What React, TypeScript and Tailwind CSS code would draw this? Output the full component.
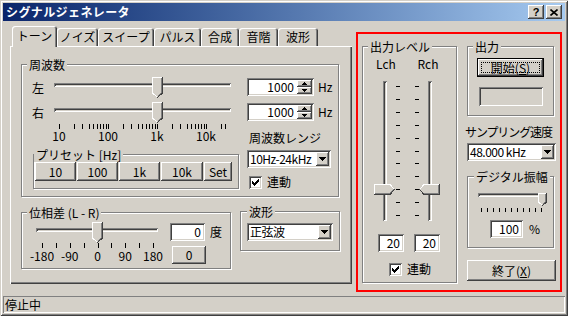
import React from "react";

const RAISED =
  "bg-[#d4d0c8] shadow-[inset_-1px_-1px_0_#404040,inset_1px_1px_0_#ffffff,inset_-2px_-2px_0_#808080]";
const SUNKEN =
  "bg-white shadow-[inset_1px_1px_0_#808080,inset_-1px_-1px_0_#ffffff,inset_2px_2px_0_#404040,inset_-2px_-2px_0_#d4d0c8]";
const ETCHED = "border border-[#808080] shadow-[inset_1px_1px_0_#ffffff,1px_1px_0_#ffffff]";
const GROOVE =
  "bg-[#d4d0c8] shadow-[inset_1px_1px_0_#808080,inset_-1px_-1px_0_#ffffff,inset_2px_2px_0_#404040]";

function GroupBox({
  title,
  className = "",
  labelClass = "ml-[5px]",
  children,
}: {
  title: string;
  className?: string;
  labelClass?: string;
  children?: React.ReactNode;
}) {
  return (
    <div className={`${ETCHED} ${className}`}>
      <div className={`-mt-[7px] h-[14px] flex ${labelClass}`}>
        <span className="bg-[#d4d0c8] px-[2px] whitespace-pre">{title}</span>
      </div>
      {children}
    </div>
  );
}

// trackbar thumbs
function ThumbDown({ w = 11, h = 21, p = 5 }: { w?: number; h?: number; p?: number }) {
  const b = h - p;
  const m = (w - 1) / 2;
  return (
    <svg width={w} height={h} className="block" shapeRendering="crispEdges">
      <polygon points={`0,0 ${w},0 ${w},${b} ${w / 2},${h} 0,${b}`} fill="#d4d0c8" />
      <path d={`M0.5 ${b} V0.5 H${w - 1}`} stroke="#fff" fill="none" />
      <path d={`M0.5 ${b} L${m + 0.5} ${h - 0.5}`} stroke="#fff" fill="none" />
      <path d={`M${w - 0.5} 0 V${b} L${m + 0.5} ${h - 0.5}`} stroke="#404040" fill="none" />
      <path d={`M${w - 1.5} 1 V${b - 0.5} L${m + 0.5} ${h - 1.5}`} stroke="#808080" fill="none" />
    </svg>
  );
}

function ThumbRight() {
  const W = 21, H = 11, p = 5, b = W - p, m = 5;
  return (
    <svg width={W} height={H} className="block" shapeRendering="crispEdges">
      <polygon points={`0,0 ${b},0 ${W},${H / 2} ${b},${H} 0,${H}`} fill="#d4d0c8" />
      <path d={`M0.5 ${H - 1} V0.5 H${b}`} stroke="#fff" fill="none" />
      <path d={`M${b} 0.5 L${W - 0.5} ${m + 0.5}`} stroke="#fff" fill="none" />
      <path d={`M0 ${H - 0.5} H${b} L${W - 0.5} ${m + 0.5}`} stroke="#404040" fill="none" />
      <path d={`M1 ${H - 1.5} H${b - 0.5} L${W - 1.5} ${m + 0.5}`} stroke="#808080" fill="none" />
    </svg>
  );
}

function ThumbLeft() {
  const W = 21, H = 11, p = 5, m = 5;
  return (
    <svg width={W} height={H} className="block" shapeRendering="crispEdges">
      <polygon points={`${p},0 ${W},0 ${W},${H} ${p},${H} 0,${H / 2}`} fill="#d4d0c8" />
      <path d={`M${p} 0.5 H${W - 1}`} stroke="#fff" fill="none" />
      <path d={`M0.5 ${m + 0.5} L${p} 0.5`} stroke="#fff" fill="none" />
      <path d={`M${W - 0.5} 0 V${H - 0.5} H${p} L0.5 ${m + 0.5}`} stroke="#404040" fill="none" />
      <path d={`M${W - 1.5} 1 V${H - 1.5} H${p}`} stroke="#808080" fill="none" />
    </svg>
  );
}

function HSlider({ className, thumb }: { className: string; thumb: number }) {
  return (
    <div className={`relative h-[21px] ${className}`}>
      <div className={`mt-[6px] h-[4px] ${GROOVE}`} />
      <div className="absolute top-0" style={{ left: thumb }}>
        <ThumbDown />
      </div>
    </div>
  );
}

function VSlider({ thumb, side }: { thumb: number; side: "right" | "left" }) {
  return (
    <div className="relative w-[21px] h-[140px] flex justify-center">
      <div className={`w-[4px] h-full ${GROOVE}`} />
      <div className="absolute left-0" style={{ top: thumb }}>
        {side === "right" ? <ThumbRight /> : <ThumbLeft />}
      </div>
    </div>
  );
}

function Ticks({ xs, width, height }: { xs: number[]; width: number; height: number }) {
  return (
    <svg width={width} height={height} className="block" shapeRendering="crispEdges">
      {xs.map((x, i) => (
        <line key={i} x1={x + 0.5} x2={x + 0.5} y1={0} y2={height} stroke="#000" />
      ))}
    </svg>
  );
}

function Dashes() {
  return (
    <svg width={4} height={140} className="block" shapeRendering="crispEdges">
      {Array.from({ length: 11 }, (_, i) => (
        <line key={i} x1={0} x2={4} y1={Math.round(5 + 12.9 * i) + 0.5} y2={Math.round(5 + 12.9 * i) + 0.5} stroke="#000" />
      ))}
    </svg>
  );
}

function Arrow({ dir }: { dir: "up" | "down" }) {
  return (
    <svg width={7} height={4} className="block" shapeRendering="crispEdges">
      <polygon points={dir === "down" ? "0,0 7,0 3.5,4" : "0,4 7,4 3.5,0"} fill="#000" />
    </svg>
  );
}

function DropBtn() {
  return (
    <div className={`w-[13px] h-[14px] shrink-0 ${RAISED} flex items-center justify-center`}>
      <Arrow dir="down" />
    </div>
  );
}

function Select({ value, className }: { value: string; className: string }) {
  return (
    <div className={`${SUNKEN} h-[18px] flex items-center pl-[3px] pr-[2px] ${className}`}>
      <span className="flex-1 whitespace-pre tracking-[-0.5px]">{value}</span>
      <DropBtn />
    </div>
  );
}

function Edit({ value, className }: { value: string; className: string }) {
  return (
    <div className={`${SUNKEN} h-[18px] flex items-center justify-end pr-[4px] ${className}`}>
      {value}
    </div>
  );
}

function SpinEdit({ value }: { value: string }) {
  return (
    <div className={`${SUNKEN} w-[67px] h-[18px] flex items-stretch`}>
      <span className="flex-1 flex items-center justify-end pr-[3px]">{value}</span>
      <div className="w-[15px] my-[2px] mr-[2px] flex flex-col">
        <div className={`flex-1 ${RAISED} flex items-center justify-center`}>
          <svg width={5} height={3} className="block" shapeRendering="crispEdges">
            <polygon points="0,3 5,3 2.5,0" fill="#000" />
          </svg>
        </div>
        <div className={`flex-1 ${RAISED} flex items-center justify-center`}>
          <svg width={5} height={3} className="block" shapeRendering="crispEdges">
            <polygon points="0,0 5,0 2.5,3" fill="#000" />
          </svg>
        </div>
      </div>
    </div>
  );
}

function Check() {
  const cols = [5, 6, 7, 6, 5, 4, 3];
  return (
    <div className={`${SUNKEN} w-[13px] h-[13px] shrink-0`}>
      <svg width={13} height={13} className="block" shapeRendering="crispEdges">
        {cols.map((t, i) => (
          <rect key={i} x={3 + i} y={t} width={1} height={3} fill="#000" />
        ))}
      </svg>
    </div>
  );
}

function Button({ children, className }: { children: React.ReactNode; className: string }) {
  return <div className={`${RAISED} flex items-center justify-center ${className}`}>{children}</div>;
}

function Tab({ label, selected, className }: { label: string; selected?: boolean; className: string }) {
  return (
    <div
      className={`flex items-center justify-center rounded-t-[3px] bg-[#d4d0c8] shadow-[inset_1px_1px_0_#ffffff,inset_-1px_0_0_#404040,inset_-2px_0_0_#808080] ${
        selected ? "h-[21px] -mb-[1px] relative z-10 pb-[2px]" : "h-[18px]"
      } ${className}`}
    >
      {label}
    </div>
  );
}

const freqList = [
  10, 20, 30, 40, 50, 60, 70, 80, 90, 100, 200, 300, 400, 500, 600, 700, 800, 900, 1000, 2000, 3000,
  4000, 5000, 6000, 7000, 8000, 9000, 10000, 20000, 24000,
];
const freqTicks = freqList.map((f) => Math.round(5 + 49 * Math.log10(f / 10)));
const freqLabels = [
  { t: "10", x: 5 },
  { t: "100", x: 54 },
  { t: "1k", x: 103 },
  { t: "10k", x: 152 },
];
const phaseTicks = Array.from({ length: 9 }, (_, i) => Math.round(6 + 13.875 * i));
const phaseLabels = ["-180", "-90", "0", "90", "180"].map((t, i) => ({ t, x: 6 + 27.75 * i }));
const ampTicks = Array.from({ length: 11 }, (_, i) => 3 + 6 * i);

export default function App() {
  return (
    <div className="w-[568px] h-[316px] bg-[#d4d0c8] p-[3px] flex flex-col overflow-hidden text-black text-[12px] leading-[14px] font-['Noto_Sans_CJK_JP',sans-serif] shadow-[inset_1px_1px_0_#d4d0c8,inset_-1px_-1px_0_#404040,inset_2px_2px_0_#ffffff,inset_-2px_-2px_0_#808080]">
      {/* title bar */}
      <div className="h-[18px] shrink-0 flex items-center pl-[3px] pr-[3px] bg-linear-to-r from-[#0a246a] to-[#a6caf0]">
        <span className="flex-1 text-white font-bold tracking-[0.4px]">シグナルジェネレータ</span>
        <div className="flex gap-[2px]">
          <div className={`w-[16px] h-[14px] ${RAISED} flex items-center justify-center font-bold text-[11px] leading-[12px] font-['Liberation_Sans',sans-serif]`}>
            ?
          </div>
          <div className={`w-[16px] h-[14px] ${RAISED} flex items-center justify-center`}>
            <svg width={8} height={7} className="block">
              <path d="M0.5 0.5 L7.5 6.5 M7.5 0.5 L0.5 6.5" stroke="#000" strokeWidth={1.6} />
            </svg>
          </div>
        </div>
      </div>

      {/* client */}
      <div className="flex-1 flex">
        <div className="pl-[7px] pt-[5px] flex flex-col">
          {/* tabs */}
          <div className="h-[20px] flex items-end pl-[2px]">
            <Tab label="トーン" selected className="w-[45px]" />
            <Tab label="ノイズ" className="w-[41px]" />
            <Tab label="スイープ" className="w-[56px]" />
            <Tab label="パルス" className="w-[47px]" />
            <Tab label="合成" className="w-[38px]" />
            <Tab label="音階" className="w-[39px]" />
            <Tab label="波形" className="w-[40px]" />
          </div>
          {/* tab panel */}
          <div className="w-[342px] h-[238px] pl-[11px] pt-[18px] shadow-[inset_1px_1px_0_#ffffff,inset_-1px_-1px_0_#404040,inset_-2px_-2px_0_#808080]">
            <GroupBox title="周波数" className="w-[318px] h-[133px]">
              {["左", "右"].map((ch, i) => (
                <div key={ch} className={`flex items-start h-[21px] ${i === 0 ? "mt-[5px]" : "mt-[4px]"}`}>
                  <div className="ml-[10px] w-[22px] h-[21px] flex items-center">{ch}</div>
                  <HSlider className="w-[177px]" thumb={98} />
                  <div className="ml-[16px] mt-[1px]">
                    <SpinEdit value="1000" />
                  </div>
                  <div className="ml-[4px] mt-[1px] h-[18px] flex items-center">Hz</div>
                </div>
              ))}
              <div className="flex mt-[1px]">
                <div className="w-[225px] flex flex-col">
                  <div className="ml-[32px]">
                    <Ticks xs={freqTicks} width={177} height={5} />
                  </div>
                  <div className="relative ml-[32px] h-[14px]">
                    {freqLabels.map((l) => (
                      <span key={l.t} className="absolute top-0 -translate-x-1/2" style={{ left: l.x }}>
                        {l.t}
                      </span>
                    ))}
                  </div>
                  <GroupBox title="プリセット [Hz]" className="ml-[11px] mt-[11px] w-[206px] h-[35px]" labelClass="ml-0">
                    <div className="flex gap-[1px] ml-[1px]">
                      <Button className="w-[41px] h-[19px]">10</Button>
                      <Button className="w-[41px] h-[19px]">100</Button>
                      <Button className="w-[41px] h-[19px]">1k</Button>
                      <Button className="w-[42px] h-[19px]">10k</Button>
                      <Button className="w-[28px] h-[19px]">Set</Button>
                    </div>
                  </GroupBox>
                </div>
                <div className="flex flex-col">
                  <div className="mt-[7px] ml-[2px]">周波数レンジ</div>
                  <Select value="10Hz-24kHz" className="mt-[5px] w-[84px]" />
                  <div className="mt-[7px] ml-[2px] flex items-center">
                    <Check />
                    <span className="ml-[5px]">連動</span>
                  </div>
                </div>
              </div>
            </GroupBox>

            <div className="flex items-start mt-[15px]">
              <GroupBox title="位相差 (L - R)" className="w-[210px] h-[57px]">
                <div className="flex mt-[2px]">
                  <div className="ml-[14px] w-[122px] flex flex-col">
                    <HSlider className="w-[122px]" thumb={56} />
                    <Ticks xs={phaseTicks} width={122} height={5} />
                    <div className="relative h-[14px] mt-[1px]">
                      {phaseLabels.map((l) => (
                        <span key={l.t} className="absolute top-0 -translate-x-1/2" style={{ left: l.x }}>
                          {l.t}
                        </span>
                      ))}
                    </div>
                  </div>
                  <div className="ml-[12px] flex flex-col">
                    <div className="flex items-center mt-[1px]">
                      <Edit value="0" className="w-[35px]" />
                      <span className="ml-[5px]">度</span>
                    </div>
                    <Button className="ml-[2px] mt-[5px] w-[34px] h-[18px]">0</Button>
                  </div>
                </div>
              </GroupBox>
              <GroupBox title="波形" className="ml-[9px] -mt-[1px] w-[100px] h-[40px]" labelClass="ml-[6px]">
                <Select value="正弦波" className="mt-[4px] ml-[6px] w-[86px]" />
              </GroupBox>
            </div>
          </div>
        </div>

        {/* right side, highlighted */}
        <div className="ml-[4px] mt-[11px] w-[206px] h-[260px] border-2 border-[#ff0000] flex items-start pl-[4px] pt-[12px]">
          <GroupBox title="出力レベル" className="w-[95px] h-[237px]">
            <div className="flex mt-[3px]">
              <div className="ml-[8px] w-[30px] text-center">Lch</div>
              <div className="ml-[12px] w-[30px] text-center">Rch</div>
            </div>
            <div className="flex mt-[10px] ml-[11px]">
              <VSlider thumb={103} side="right" />
              <div className="ml-[1px]">
                <Dashes />
              </div>
              <div className="ml-[15px]">
                <Dashes />
              </div>
              <VSlider thumb={103} side="left" />
            </div>
            <div className="flex mt-[13px] ml-[15px] gap-[10px]">
              <Edit value="20" className="w-[26px]" />
              <Edit value="20" className="w-[26px]" />
            </div>
            <div className="flex items-center mt-[10px] ml-[26px]">
              <Check />
              <span className="ml-[5px]">連動</span>
            </div>
          </GroupBox>

          <div className="ml-[10px] w-[89px] flex flex-col">
            <GroupBox title="出力" className="w-[87px] h-[70px]">
              <div className="mt-[4px] ml-[9px] w-[67px] h-[19px] border border-black">
                <div className={`w-full h-full ${RAISED} p-[3px]`}>
                  <div className="w-full h-full border border-dotted border-black flex items-center justify-center">
                    <span>
                      開始(<u>S</u>)
                    </span>
                  </div>
                </div>
              </div>
              <div className="mt-[10px] ml-[11px] w-[64px] h-[19px] bg-[#d4d0c8] shadow-[inset_1px_1px_0_#808080,inset_-1px_-1px_0_#ffffff,inset_2px_2px_0_#404040]" />
            </GroupBox>
            <div className="mt-[9px] -ml-[2px] whitespace-nowrap tracking-[-1.1px]">サンプリング速度</div>
            <Select value="48.000 kHz" className="mt-[4px] w-[89px]" />
            <GroupBox title="デジタル振幅" className="mt-[15px] w-[87px] h-[72px]" labelClass="ml-[6px]">
              <div className="relative mt-[9px] ml-[10px] w-[69px] h-[13px]">
                <div className={`mt-[5px] w-[65px] h-[4px] ${GROOVE}`} />
                <div className="absolute top-0" style={{ left: 60 }}>
                  <ThumbDown w={9} h={13} p={4} />
                </div>
              </div>
              <div className="mt-[2px] ml-[10px]">
                <Ticks xs={ampTicks} width={69} height={4} />
              </div>
              <div className="flex items-center mt-[8px] ml-[22px]">
                <Edit value="100" className="w-[33px]" />
                <span className="ml-[6px]">%</span>
              </div>
            </GroupBox>
            <Button className="mt-[12px] w-[89px] h-[21px]">
              <span>
                終了(<u>X</u>)
              </span>
            </Button>
          </div>
        </div>
      </div>

      {/* status bar */}
      <div className="h-[17px] shrink-0 flex items-center pl-[2px] shadow-[inset_1px_1px_0_#808080,inset_-1px_-1px_0_#ffffff]">
        停止中
      </div>
    </div>
  );
}
